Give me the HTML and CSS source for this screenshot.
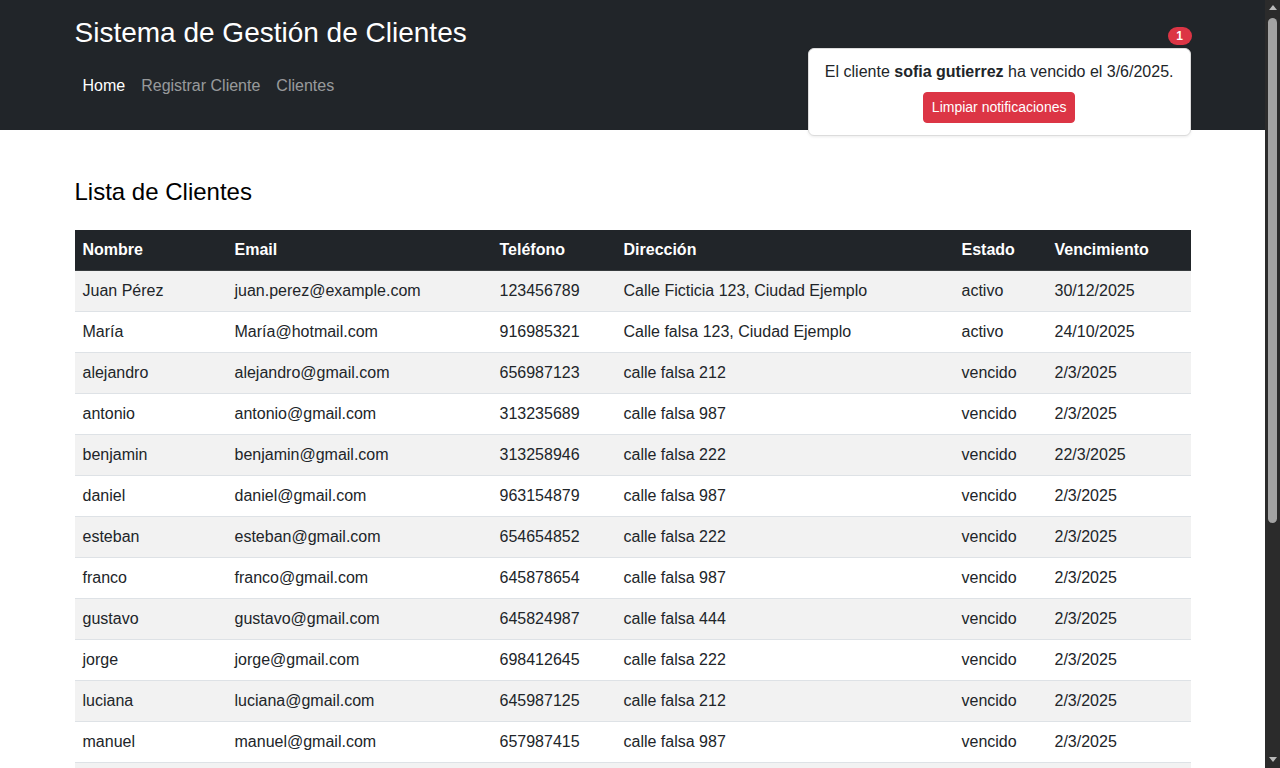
FILE: index.html
```html
<!DOCTYPE html>
<html lang="es">
<head>
<meta charset="utf-8">
<title>Sistema de Gestión de Clientes</title>
<link rel="stylesheet" href="styles.css">
</head>
<body>
<div class="page">
<header class="topbar">
  <div class="container">
    <h1 class="brand">Sistema de Gestión de Clientes</h1>
    <nav class="nav">
      <a class="nav-link active" href="#">Home</a>
      <a class="nav-link" href="#">Registrar Cliente</a>
      <a class="nav-link" href="#">Clientes</a>
    </nav>
    <div class="notif">
      <span class="badge">1</span>
      <p class="notif-text">El cliente <strong>sofia gutierrez</strong> ha vencido el 3/6/2025.</p>
      <button class="btn-clear" type="button">Limpiar notificaciones</button>
    </div>
  </div>
</header>
<main class="container main">
  <h2 class="title">Lista de Clientes</h2>
  <table class="table">
    <colgroup>
      <col class="c1"><col class="c2"><col class="c3"><col class="c4"><col class="c5"><col class="c6">
    </colgroup>
    <thead>
      <tr><th>Nombre</th><th>Email</th><th>Teléfono</th><th>Dirección</th><th>Estado</th><th>Vencimiento</th></tr>
    </thead>
    <tbody>
      <tr><td>Juan Pérez</td><td>juan.perez@example.com</td><td>123456789</td><td>Calle Ficticia 123, Ciudad Ejemplo</td><td>activo</td><td>30/12/2025</td></tr>
      <tr><td>María</td><td>María@hotmail.com</td><td>916985321</td><td>Calle falsa 123, Ciudad Ejemplo</td><td>activo</td><td>24/10/2025</td></tr>
      <tr><td>alejandro</td><td>alejandro@gmail.com</td><td>656987123</td><td>calle falsa 212</td><td>vencido</td><td>2/3/2025</td></tr>
      <tr><td>antonio</td><td>antonio@gmail.com</td><td>313235689</td><td>calle falsa 987</td><td>vencido</td><td>2/3/2025</td></tr>
      <tr><td>benjamin</td><td>benjamin@gmail.com</td><td>313258946</td><td>calle falsa 222</td><td>vencido</td><td>22/3/2025</td></tr>
      <tr><td>daniel</td><td>daniel@gmail.com</td><td>963154879</td><td>calle falsa 987</td><td>vencido</td><td>2/3/2025</td></tr>
      <tr><td>esteban</td><td>esteban@gmail.com</td><td>654654852</td><td>calle falsa 222</td><td>vencido</td><td>2/3/2025</td></tr>
      <tr><td>franco</td><td>franco@gmail.com</td><td>645878654</td><td>calle falsa 987</td><td>vencido</td><td>2/3/2025</td></tr>
      <tr><td>gustavo</td><td>gustavo@gmail.com</td><td>645824987</td><td>calle falsa 444</td><td>vencido</td><td>2/3/2025</td></tr>
      <tr><td>jorge</td><td>jorge@gmail.com</td><td>698412645</td><td>calle falsa 222</td><td>vencido</td><td>2/3/2025</td></tr>
      <tr><td>luciana</td><td>luciana@gmail.com</td><td>645987125</td><td>calle falsa 212</td><td>vencido</td><td>2/3/2025</td></tr>
      <tr><td>manuel</td><td>manuel@gmail.com</td><td>657987415</td><td>calle falsa 987</td><td>vencido</td><td>2/3/2025</td></tr>
      <tr><td>mario</td><td>mario@gmail.com</td><td>654123987</td><td>calle falsa 444</td><td>vencido</td><td>2/3/2025</td></tr>
      <tr><td>martin</td><td>martin@gmail.com</td><td>698745123</td><td>calle falsa 212</td><td>vencido</td><td>2/3/2025</td></tr>
      <tr><td>nicolas</td><td>nicolas@gmail.com</td><td>645321789</td><td>calle falsa 222</td><td>vencido</td><td>2/3/2025</td></tr>
      <tr><td>pablo</td><td>pablo@gmail.com</td><td>612398745</td><td>calle falsa 987</td><td>vencido</td><td>2/3/2025</td></tr>
      <tr><td>roberto</td><td>roberto@gmail.com</td><td>678912345</td><td>calle falsa 444</td><td>vencido</td><td>2/3/2025</td></tr>
      <tr><td>santiago</td><td>santiago@gmail.com</td><td>632145987</td><td>calle falsa 212</td><td>vencido</td><td>2/3/2025</td></tr>
      <tr><td>sofia gutierrez</td><td>sofia@gmail.com</td><td>654987321</td><td>calle falsa 222</td><td>vencido</td><td>3/6/2025</td></tr>
      <tr><td>valeria</td><td>valeria@gmail.com</td><td>687451239</td><td>calle falsa 987</td><td>vencido</td><td>2/3/2025</td></tr>
    </tbody>
  </table>
</main>
</div>
<div class="scrollbar" aria-hidden="true">
  <div class="scroll-inner">
    <div class="arrow arrow-up"></div>
    <div class="track"><div class="thumb"></div></div>
    <div class="arrow arrow-down"></div>
  </div>
</div>
</body>
</html>
```
FILE: styles.css
```css
* { box-sizing: border-box; }
html { background: #fff; }
body {
  margin: 0;
  display: flex;
  align-items: stretch;
  background: #fff;
  color: #000;
  font-family: "Liberation Sans", Arial, sans-serif;
  font-size: 16px;
  line-height: 1.5;
}
.page {
  flex: 1;
  min-width: 0;
}
.container {
  max-width: 1140px;
  margin: 0 auto;
  padding: 0 12px;
}
.topbar {
  background: #212529;
  height: 130px;
  padding-top: 16px;
}
.topbar .container { position: relative; }
.brand {
  margin: 0;
  color: #fff;
  font-weight: 400;
  font-size: 28px;
  line-height: 34px;
}
.nav {
  display: flex;
  margin-top: 16px;
}
.nav-link {
  display: block;
  padding: 8px 8px;
  color: rgba(255,255,255,.55);
  text-decoration: none;
  line-height: 24px;
}
.nav-link.active { color: #fff; }
.notif {
  position: absolute;
  top: 32px;
  right: 12px;
  background: #fff;
  border: 1px solid #dcdcdc;
  border-radius: 6px;
  padding: 11px 16px 12px;
  text-align: center;
  box-shadow: 0 1px 3px rgba(0,0,0,.08);
  z-index: 2;
}
.notif-text {
  margin: 0 0 8px;
  color: #212529;
  line-height: 24px;
}
.notif-text strong { font-weight: 700; }
.btn-clear {
  font-family: inherit;
  font-size: 14px;
  line-height: 21px;
  padding: 4px 8px;
  color: #fff;
  background: #dc3545;
  border: 1px solid #dc3545;
  border-radius: 4px;
}
.badge {
  position: absolute;
  top: -22px;
  right: -2px;
  background: #dc3545;
  color: #fff;
  font-size: 12px;
  font-weight: 700;
  line-height: 12px;
  padding: 3px 8.5px;
  border-radius: 10px;
}
.main {
  padding-top: 47px;
  padding-bottom: 12px;
}
.title {
  margin: 0 0 24px;
  font-size: 24px;
  font-weight: 400;
  line-height: 29px;
}
.table {
  width: 100%;
  border-collapse: collapse;
  margin-bottom: 16px;
  table-layout: fixed;
}
.c1 { width: 152px; }
.c2 { width: 265px; }
.c3 { width: 124px; }
.c4 { width: 338px; }
.c5 { width: 93px; }
.c6 { width: 144px; }
.table th, .table td {
  text-align: left;
  padding: 8px;
  line-height: 24px;
  border-bottom: 1px solid #dee2e6;
  white-space: nowrap;
}
.table th {
  background: #212529;
  color: #fff;
  font-weight: 700;
  border-bottom-color: #373b3e;
}
.table td { color: #212529; }
.table tbody tr:nth-child(odd) td { background: #f2f2f2; }

/* window scrollbar */
.scrollbar {
  width: 15px;
  flex: none;
  background: #2b2b2b;
}
.scroll-inner {
  position: sticky;
  top: 0;
  height: 100vh;
  display: flex;
  flex-direction: column;
  align-items: center;
}
.arrow {
  flex: none;
  width: 15px;
  height: 15px;
  display: flex;
  justify-content: center;
}
.arrow-up::before,
.arrow-down::before {
  content: "";
  width: 0;
  height: 0;
  border-left: 4.5px solid transparent;
  border-right: 4.5px solid transparent;
}
.arrow-up::before {
  margin-top: 5px;
  border-bottom: 5px solid #b9b9b9;
}
.arrow-down::before {
  margin-top: 4px;
  border-top: 5px solid #b9b9b9;
}
.track {
  flex: 1;
  width: 15px;
  display: flex;
  justify-content: center;
  padding-top: 3px;
}
.thumb {
  width: 9px;
  height: 505px;
  border-radius: 5px;
  background: #a3a3a3;
}
```
